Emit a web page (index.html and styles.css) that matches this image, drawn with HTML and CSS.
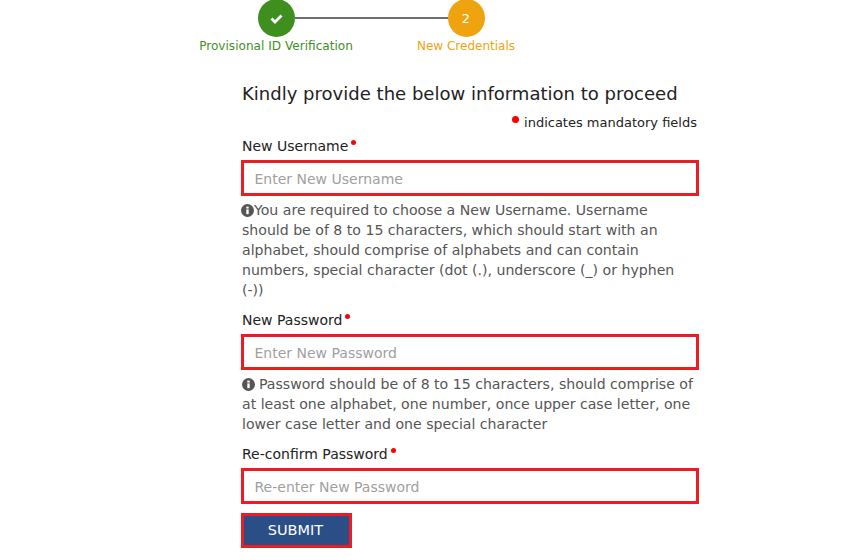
FILE: index.html
```html
<!DOCTYPE html>
<html lang="en">
<head>
<meta charset="utf-8">
<title>New Credentials</title>
<link rel="stylesheet" href="styles.css">
</head>
<body>
<div class="stepper">
  <div class="step done">
    <div class="circle">
      <svg width="13" height="11" viewBox="0 0 13 11"><path d="M1.5 5.5 L5 9 L11.5 2.5" fill="none" stroke="#fff" stroke-width="2.8"/></svg>
    </div>
    <div class="step-label">Provisional ID Verification</div>
  </div>
  <div class="line"></div>
  <div class="step current">
    <div class="circle">2</div>
    <div class="step-label">New Credentials</div>
  </div>
</div>
<form class="form">
  <h1 class="title">Kindly provide the below information to proceed</h1>
  <p class="legend"><span class="dot big"></span>indicates mandatory fields</p>
  <label class="label">New Username<span class="dot"></span></label>
  <input class="field" type="text" placeholder="Enter New Username">
  <p class="hint"><svg class="info" viewBox="0 0 12 12"><circle cx="6" cy="6" r="6" fill="#555"/><rect x="4.9" y="5" width="2.2" height="4.4" fill="#fff"/><rect x="4.9" y="2.4" width="2.2" height="1.8" fill="#fff"/></svg>You are required to choose a New Username. Username should be of 8 to 15 characters, which should start with an alphabet, should comprise of alphabets and can contain numbers, special character (dot (.), underscore (_) or hyphen (-))</p>
  <label class="label">New Password<span class="dot"></span></label>
  <input class="field" type="password" placeholder="Enter New Password">
  <p class="hint"><svg class="info spaced" viewBox="0 0 12 12"><circle cx="6" cy="6" r="6" fill="#555"/><rect x="4.9" y="5" width="2.2" height="4.4" fill="#fff"/><rect x="4.9" y="2.4" width="2.2" height="1.8" fill="#fff"/></svg>Password should be of 8 to 15 characters, should comprise of at least one alphabet, one number, once upper case letter, one lower case letter and one special character</p>
  <label class="label">Re-confirm Password<span class="dot"></span></label>
  <input class="field" type="password" placeholder="Re-enter New Password">
  <button class="submit" type="button">SUBMIT</button>
</form>
</body>
</html>
```
FILE: styles.css
```css
* { box-sizing: border-box; }
html, body { margin: 0; padding: 0; height: 560px; overflow: hidden; background: #fff; }
body { font-family: "DejaVu Sans", Verdana, sans-serif; color: #222; }

.stepper { display: flex; align-items: flex-start; height: 62px; margin-left: 198px; margin-top: -1px; }
.step { display: flex; flex-direction: column; align-items: center; font-size: 12.1px; }
.step.done { width: 156px; color: #3f8f1f; }
.step.current { width: 98px; color: #efa30f; font-size: 12px; }
.circle { width: 37px; height: 38px; border-radius: 50%; display: flex; align-items: center; justify-content: center; color: #fff; font-size: 13px; }
.done .circle { background: #3f8f1f; }
.current .circle { background: #efa30f; }
.step-label { margin-top: 1px; line-height: 16px; white-space: nowrap; }
.line { flex: none; width: 153px; height: 2px; margin-top: 18px; margin-left: -59px; margin-right: -31px; background: #6f6f6f; }

.form { width: 458px; margin-left: 241px; margin-top: 21px; display: flex; flex-direction: column; }
.title { margin: 0; padding-left: 1px; font-size: 18.05px; font-weight: 400; line-height: 24px; color: #222; white-space: nowrap; }
.legend { margin: 7px 2px 0 0; text-align: right; font-size: 13px; line-height: 20px; color: #222; }
.label { margin-top: 2px; padding-left: 1px; font-size: 14px; line-height: 20px; color: #222; }
.legend + .label { margin-top: 3px; }
.dot { display: inline-block; width: 5px; height: 5px; border-radius: 50%; background: #f00; margin-left: 3px; vertical-align: 6px; }
.dot.big { width: 7px; height: 7px; margin: 0 5px 0 0; vertical-align: 4px; }
.field { display: block; width: 458px; height: 36px; margin-top: 4px; border: 3px solid #ed1c24; padding: 2px 11px 0 10.5px; font: 14px "DejaVu Sans", Verdana, sans-serif; color: #222; background: #fff; outline: 0; border-radius: 0; }
.field::placeholder { color: #a0a0a0; opacity: 1; }
.hint { margin: 4px 0 0; padding: 0 5px 8px 1px; font-size: 14.1px; line-height: 20px; color: #555; }
.info { width: 13px; height: 13px; vertical-align: -1.5px; margin-left: -1px; }
.info.spaced { margin-left: 0; margin-right: 4px; }
.submit { align-self: flex-start; width: 111px; height: 35px; margin-top: 9px; border: 3px solid #ed1c24; background: #2c4e86; color: #fff; font: 14.5px "DejaVu Sans", Verdana, sans-serif; padding: 0 2px 2px 0; border-radius: 0; }
```
